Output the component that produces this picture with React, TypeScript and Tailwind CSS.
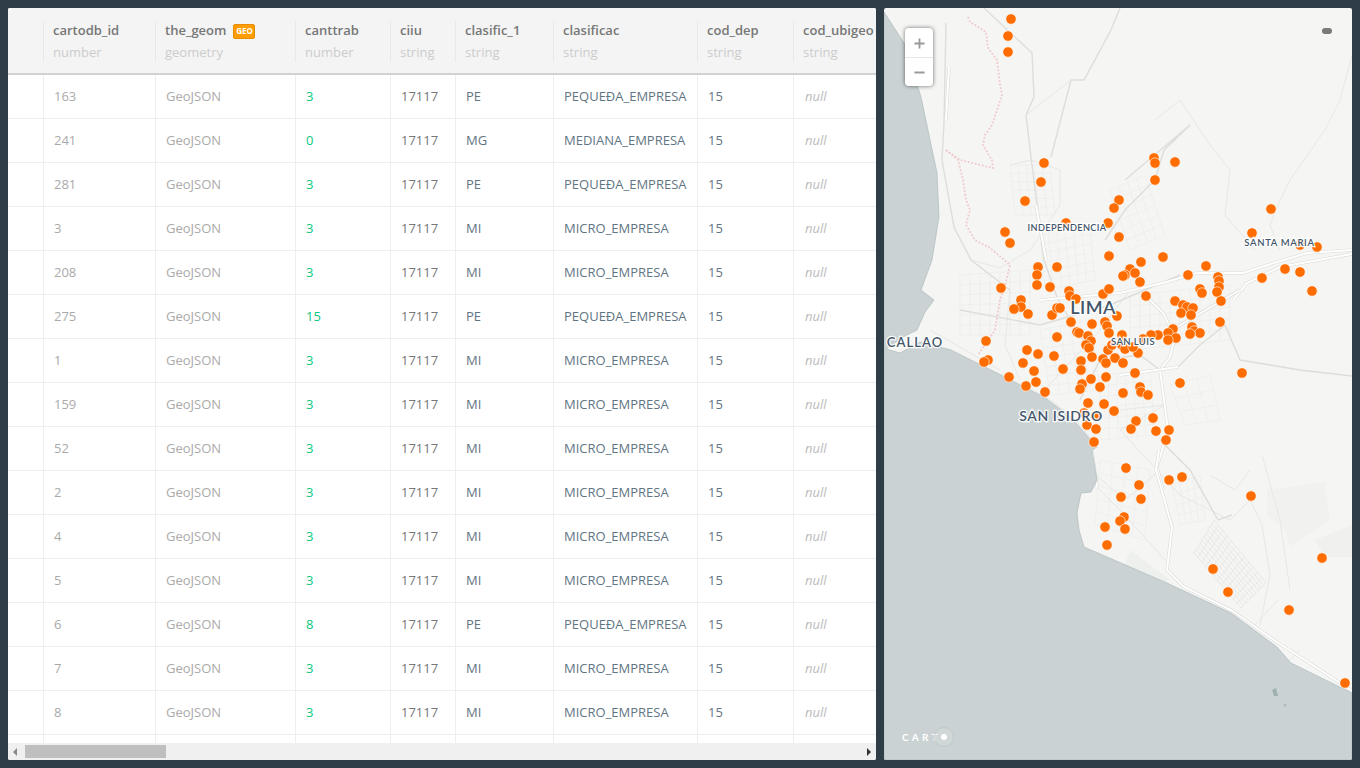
import { Fragment } from 'react';

const columns = [
  { name: '', type: '', width: 'w-[35px]' },
  { name: 'cartodb_id', type: 'number', width: 'w-[112px]' },
  { name: 'the_geom', type: 'geometry', width: 'w-[140px]' },
  { name: 'canttrab', type: 'number', width: 'w-[95px]' },
  { name: 'ciiu', type: 'string', width: 'w-[65px]' },
  { name: 'clasific_1', type: 'string', width: 'w-[98px]' },
  { name: 'clasificac', type: 'string', width: 'w-[144px]' },
  { name: 'cod_dep', type: 'string', width: 'w-[96px]' },
  { name: 'cod_ubigeo', type: 'string', width: 'w-[100px]' },
];

const rows = [
  ['163', '3', 'PE', 'PEQUEĐA_EMPRESA'],
  ['241', '0', 'MG', 'MEDIANA_EMPRESA'],
  ['281', '3', 'PE', 'PEQUEĐA_EMPRESA'],
  ['3', '3', 'MI', 'MICRO_EMPRESA'],
  ['208', '3', 'MI', 'MICRO_EMPRESA'],
  ['275', '15', 'PE', 'PEQUEĐA_EMPRESA'],
  ['1', '3', 'MI', 'MICRO_EMPRESA'],
  ['159', '3', 'MI', 'MICRO_EMPRESA'],
  ['52', '3', 'MI', 'MICRO_EMPRESA'],
  ['2', '3', 'MI', 'MICRO_EMPRESA'],
  ['4', '3', 'MI', 'MICRO_EMPRESA'],
  ['5', '3', 'MI', 'MICRO_EMPRESA'],
  ['6', '8', 'PE', 'PEQUEĐA_EMPRESA'],
  ['7', '3', 'MI', 'MICRO_EMPRESA'],
  ['8', '3', 'MI', 'MICRO_EMPRESA'],
  ['', '', '', ''],
];

const pins = [
  [1011, 19], [1008, 36], [1008, 52], [1044, 163], [1041, 182], [1025, 201], [1005, 232], [1010, 243], [1066, 223],
  [1119, 200], [1114, 208], [1108, 223], [1119, 237], [1109, 256], [1154, 158], [1155, 163], [1175, 162], [1155, 180],
  [1271, 209], [1252, 233], [1317, 247], [1300, 245], [1163, 257], [1141, 262], [1130, 269], [1125, 275], [1135, 273],
  [1140, 282], [1146, 296], [1188, 275], [1206, 266], [1218, 277], [1219, 281], [1219, 287], [1217, 292], [1200, 289],
  [1202, 293], [1175, 301], [1221, 301], [1262, 278], [1285, 269], [1300, 272], [1312, 291], [1038, 267], [1057, 267],
  [1037, 275], [1037, 285], [1050, 287], [1001, 288], [1069, 291], [1070, 296], [1076, 299], [1103, 294], [1109, 289],
  [1123, 276], [1021, 300], [1021, 307], [1014, 309], [1028, 314], [1052, 315], [1057, 308], [1060, 308], [1071, 322],
  [1092, 324], [1105, 322], [1107, 326], [1117, 316], [1109, 333], [1122, 335], [1077, 332], [1079, 333], [1057, 337],
  [986, 341], [1088, 336], [1091, 341], [1086, 345], [1089, 348], [1108, 350], [1112, 345], [1122, 345], [1027, 350],
  [1038, 354], [1054, 356], [1092, 357], [1103, 359], [1115, 358], [1106, 363], [1123, 363], [988, 360], [984, 362],
  [1023, 363], [1081, 361], [1081, 370], [1034, 371], [1063, 369], [1106, 377], [1091, 379], [1009, 377], [1036, 382],
  [1026, 386], [1082, 384], [1080, 389], [1100, 387], [1045, 392], [1123, 393], [1088, 403], [1104, 404], [1114, 411],
  [1084, 413], [1096, 416], [1087, 425], [1096, 429], [1094, 442], [1183, 305], [1187, 307], [1193, 308], [1181, 313],
  [1191, 315], [1220, 322], [1173, 329], [1168, 333], [1192, 327], [1194, 331], [1200, 333], [1190, 334], [1176, 338],
  [1168, 340], [1158, 335], [1151, 335], [1143, 339], [1125, 349], [1138, 353], [1133, 347], [1135, 373], [1180, 383],
  [1242, 373], [1140, 387], [1141, 392], [1148, 395], [1136, 421], [1153, 418], [1131, 429], [1156, 431], [1169, 430],
  [1166, 440], [1126, 468], [1139, 485], [1121, 497], [1141, 499], [1169, 480], [1182, 477], [1251, 496], [1124, 517],
  [1120, 521], [1125, 529], [1105, 527], [1107, 545], [1213, 569], [1228, 592], [1289, 610], [1322, 558], [1345, 683],
];

const mainRoads = [
  '984,8 1032,53 1034,97 1026,115 1031,157 1044,260 1058,300 1086,345',
  '946,23 944,123 942,160 954,227 971,260 1010,290',
  '1051,157 1071,80 1084,80 1111,30 1120,8',
  '1125,180 1190,125 1164,150 1155,180 1125,210 1105,240',
  '960,310 1040,325 1110,305 1180,275',
  '1160,370 1140,355 1100,360 1080,400',
  '1178,367 1200,345 1225,325 1240,360 1300,370 1352,376',
  '1232,515 1218,520 1190,470 1160,440',
];

const minorRoads = [
  '1026,115 1071,80',
  '1010,165 1031,160 1060,170 1060,205 1030,250 1000,268 971,260',
  '1290,180 1278,205 1270,225 1280,250',
  '1352,55 1340,100 1325,130 1290,180',
  '1155,120 1180,100 1210,145 1230,170 1225,215 1255,250',
  '930,330 1000,370',
  '1010,290 1005,345 1020,380',
  '1040,395 1100,330 1130,290',
  '1120,410 1165,405 1120,430 1180,495 1230,520',
  '1097,487 1120,510 1165,560',
  '1230,520 1250,500 1262,525 1270,575 1260,625',
  '1262,455 1280,520 1290,590',
  '1090,470 1125,500 1160,470',
  '1210,475 1235,490 1250,470',
  '1278,600 1250,630',
  '1300,650 1285,665',
];

const whiteRoads = [
  '1120,293 1163,283 1197,273 1243,273 1277,262 1307,253 1352,250',
  '1233,300 1247,283 1280,267 1352,254',
  '1040,300 1120,293',
  '1150,300 1163,313 1175,337 1170,357 1160,370 1168,430 1157,467 1163,490',
  '1120,375 1178,367',
  '1177,327 1240,290',
  '1159,450 1156,470 1172,527 1167,570 1184,587 1231,610 1274,640 1351,690',
  '1092,450 1097,487',
  '1001,375 1044,397 1071,417 1097,447',
  '949,67 946,120',
  '1036,205 1046,260',
];

// four corners of a block of streets, then the number of streets each way
const streetBlocks = [
  [1194, 553, 1214, 520, 1266, 583, 1241, 608, 10, 12],
  [1010, 165, 1050, 165, 1055, 215, 1015, 215, 5, 6],
  [1040, 235, 1090, 225, 1095, 280, 1045, 290, 6, 6],
  [960, 275, 1030, 270, 1030, 335, 960, 335, 7, 6],
  [1040, 330, 1090, 320, 1100, 390, 1050, 395, 5, 7],
  [1110, 190, 1145, 175, 1165, 235, 1130, 250, 4, 6],
  [1130, 295, 1230, 285, 1230, 340, 1130, 350, 10, 5],
  [1100, 375, 1150, 370, 1155, 435, 1100, 440, 6, 6],
  [1100, 460, 1150, 470, 1145, 540, 1095, 525, 4, 5],
  [1172, 485, 1200, 475, 1205, 520, 1180, 525, 4, 4],
  [1170, 385, 1210, 375, 1220, 420, 1185, 425, 3, 3],
];

const pinkDots = [
  '968,17 970,22 986,32 988,48 997,60 1000,85 1002,95 992,125 985,135 983,145 992,160 993,168 960,160 946,150',
  '946,150 958,160 963,180 966,200 970,210 966,225 975,240 990,248 1002,258 1010,265 1004,290 1000,300 995,330 978,355',
];

const lerp = (a: number, b: number, t: number) => a + (b - a) * t;

const StreetBlock = ({ block, color }: { block: number[]; color: string }) => {
  const [ax, ay, bx, by, cx, cy, dx, dy, n, m] = block;
  const lines = [];
  for (let i = 0; i <= n; i++) {
    const t = i / n;
    lines.push(`M${lerp(ax, bx, t)} ${lerp(ay, by, t)}L${lerp(dx, cx, t)} ${lerp(dy, cy, t)}`);
  }
  for (let i = 0; i <= m; i++) {
    const t = i / m;
    lines.push(`M${lerp(ax, dx, t)} ${lerp(ay, dy, t)}L${lerp(bx, cx, t)} ${lerp(by, cy, t)}`);
  }
  return <path d={lines.join('')} fill="none" stroke={color} strokeWidth="0.7" />;
};

const MapLabel = ({ x, y, size, spacing, children }: { x: number; y: number; size: number; spacing: number; children: string }) => (
  <text
    x={x}
    y={y}
    fontSize={size}
    letterSpacing={spacing}
    textAnchor="middle"
    className="font-['Lato',sans-serif] font-semibold fill-[#43566a] stroke-white/90 stroke-[2.5px] [paint-order:stroke]"
  >
    {children}
  </text>
);

const MapDrawing = () => (
  <svg viewBox="884 8 468 752" className="block w-full h-full">
    <rect x="884" y="8" width="468" height="752" fill="#f5f5f3" />
    <path d="M1267 490 L1325 482 L1330 520 L1290 547 L1285 530 L1267 515 Z" fill="#f1f2f0" />
    <path d="M1130 550 L1170 580 L1150 585 L1125 565 Z" fill="#eef0ed" />
    <path d="M1315 540 L1352 525 L1352 557 L1325 557 Z" fill="#f0f1ef" />
    {streetBlocks.map((block, i) => (
      <StreetBlock key={i} block={block} color={i === 0 ? '#e2e2e0' : '#ededeb'} />
    ))}
    {minorRoads.map((points, i) => (
      <polyline key={i} points={points} fill="none" stroke="#e7e7e5" strokeWidth="1" />
    ))}
    {mainRoads.map((points, i) => (
      <polyline key={i} points={points} fill="none" stroke="#dddddb" strokeWidth="1.4" />
    ))}
    {pinkDots.map((points, i) => (
      <polyline key={i} points={points} fill="none" stroke="#efc9cb" strokeWidth="1.8" strokeDasharray="1.8 1.8" />
    ))}
    {whiteRoads.map((points, i) => (
      <Fragment key={i}>
        <polyline points={points} fill="none" stroke="#dcdcda" strokeWidth="3.2" />
        <polyline points={points} fill="none" stroke="#ffffff" strokeWidth="2" />
      </Fragment>
    ))}
    <path
      d="M884 12 L904 43 L921 97 L937 173 L939 217 L932 260 L921 290 L934 300 L925 312 L917 330 L905 336 L886 349 L900 353 L920 342 L951 350 L1001 375 L1044 397 L1071 417 L1097 447 L1092 450 L1097 480 L1091 492 L1081 493 L1077 513 L1079 530 L1084 547 L1167 583 L1231 613 L1277 647 L1291 663 L1352 693 L1352 760 L884 760 Z"
      fill="#cad2d3"
      stroke="#aebcbd"
      strokeWidth="0.7"
    />
    <path d="M1272 690 L1276 688 L1278 696 L1274 696 Z" fill="#9fb0b1" />
    <circle cx="1285" cy="705" r="1.5" fill="#aebcbd" />
    {pins.map(([x, y], i) => (
      <circle key={i} cx={x} cy={y} r="5.2" fill="#ff6c00" stroke="#ffffff" strokeWidth="0.6" />
    ))}
    <MapLabel x={1067} y={231} size={9.2} spacing={0.35}>INDEPENDENCIA</MapLabel>
    <MapLabel x={1279.5} y={246} size={9.5} spacing={0.65}>SANTA MARIA</MapLabel>
    <MapLabel x={1093} y={314} size={18} spacing={0.5}>LIMA</MapLabel>
    <MapLabel x={1133} y={345} size={9.5} spacing={0.4}>SAN LUIS</MapLabel>
    <MapLabel x={915} y={347} size={13} spacing={1.1}>CALLAO</MapLabel>
    <MapLabel x={1061} y={421} size={14} spacing={0.6}>SAN ISIDRO</MapLabel>
  </svg>
);

const HeaderCell = ({ index }: { index: number }) => {
  const col = columns[index];
  return (
    <div className={`${col.width} shrink-0 h-[41px] ${index > 0 ? 'border-l border-[#e8e8e8] pl-[9px]' : ''}`}>
      {index > 0 && (
        <>
          <div className="flex items-center h-[18px] mt-[1px] text-[13px] font-semibold text-[#777] whitespace-nowrap">
            {col.name}
            {col.name === 'the_geom' && (
              <span className="ml-[7px] h-[15px] w-[22px] flex items-center justify-center rounded-[2px] bg-[#ff9d00] border border-[#e88e00] text-[8px] font-bold text-white">
                GEO
              </span>
            )}
          </div>
          <div className="mt-[3px] text-[13px] leading-[18px] text-[#ccc]">{col.type}</div>
        </>
      )}
    </div>
  );
};

const TableRow = ({ row }: { row: string[] }) => {
  const [id, count, short, name] = row;
  const cells = [
    { text: '', cls: '' },
    { text: id, cls: 'text-[#aaa]' },
    { text: id ? 'GeoJSON' : '', cls: 'text-[#aaa]' },
    { text: count, cls: 'text-[#0ac781]' },
    { text: id ? '17117' : '', cls: 'text-[#777]' },
    { text: short, cls: 'text-[#5f7583]' },
    { text: name, cls: 'text-[#5f7583]' },
    { text: id ? '15' : '', cls: 'text-[#5f7583]' },
    { text: id ? 'null' : '', cls: 'italic text-[#bbb] pl-[1px]' },
  ];
  return (
    <div className="flex h-[44px] shrink-0 border-b border-[#eeeeee] bg-white">
      {cells.map((cell, i) => (
        <div
          key={i}
          className={`${columns[i].width} shrink-0 flex items-center text-[13px] whitespace-nowrap ${i > 0 ? 'border-l border-[#eeeeee] pl-[10px]' : ''}`}
        >
          <span className={cell.cls}>{cell.text}</span>
        </div>
      ))}
    </div>
  );
};

export default function App() {
  return (
    <div className="flex gap-2 p-2 w-[1360px] h-[768px] bg-[#2f3d48] font-['Open_Sans',sans-serif]">
      <div className="flex flex-col w-[868px] h-full rounded-[2px] overflow-hidden bg-white">
        <div className="flex-1 min-h-0 overflow-hidden">
          <div className="flex h-[67px] pt-[13px] bg-[#f4f4f4] border-b-2 border-[#d2d2d2] w-[885px]">
            {columns.map((col, i) => (
              <HeaderCell key={col.name} index={i} />
            ))}
          </div>
          <div className="w-[885px]">
            {rows.map((row, i) => (
              <TableRow key={i} row={row} />
            ))}
          </div>
        </div>
        <div className="flex items-center h-[17px] shrink-0 bg-[#f0f0f0]">
          <span className="ml-[5px] w-0 h-0 border-y-[4px] border-y-transparent border-r-[4px] border-r-[#888]" />
          <div className="ml-[8px] w-[141px] h-[13px] bg-[#bfbfbf]" />
          <span className="ml-auto mr-[5px] w-0 h-0 border-y-[4px] border-y-transparent border-l-[4px] border-l-[#333]" />
        </div>
      </div>

      <div className="relative w-[468px] h-full rounded-[2px] overflow-hidden">
        <MapDrawing />
        <div className="absolute left-[21px] top-[20px] w-[28px] h-[58px] flex flex-col rounded-[4px] bg-white shadow-[0_0_4px_rgba(0,0,0,0.55)] text-[#999]">
          <div className="flex-1 flex items-center justify-center pt-[2px] border-b border-[#e6e6e6]">
            <svg viewBox="0 0 12 12" className="w-[11px] h-[11px]">
              <path d="M6 0.5V11.5M0.5 6H11.5" stroke="currentColor" strokeWidth="2" fill="none" />
            </svg>
          </div>
          <div className="flex-1 flex items-center justify-center pt-[2px]">
            <svg viewBox="0 0 12 12" className="w-[11px] h-[11px]">
              <path d="M0.5 6H11.5" stroke="currentColor" strokeWidth="2" fill="none" />
            </svg>
          </div>
        </div>
        <div className="absolute left-[438px] top-[20px] w-[10px] h-[6px] rounded-full bg-[#7a7a7a]" />
        <div className="absolute left-[18px] top-[719px] flex items-center">
          <span className="text-[10px] leading-[20px] font-bold tracking-[3.2px] text-white font-['Lato',sans-serif]">CART</span>
          <span className="-ml-[7px] w-[20px] h-[20px] rounded-full bg-white/10 border border-[#c0c8c9] flex items-center justify-center">
            <span className="w-[6px] h-[6px] rounded-full bg-white" />
          </span>
        </div>
      </div>
    </div>
  );
}
